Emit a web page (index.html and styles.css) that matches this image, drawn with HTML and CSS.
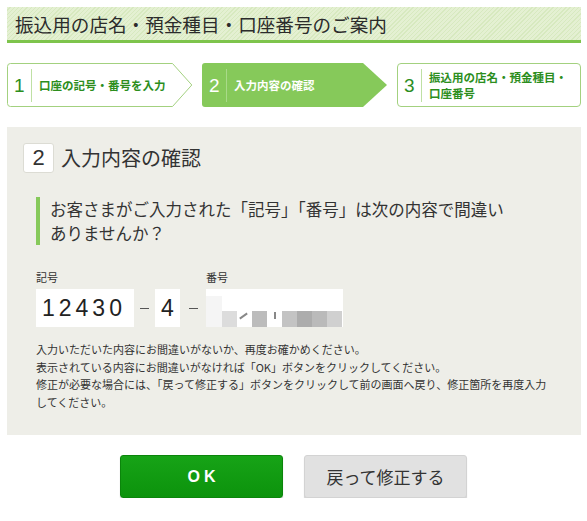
FILE: index.html
```html
<!DOCTYPE html>
<html lang="ja">
<head>
<meta charset="utf-8">
<title>振込用の店名・預金種目・口座番号のご案内</title>
<link rel="stylesheet" href="styles.css">
</head>
<body>
<header class="page-head">
  <h1 class="page-title">振込用の店名・預金種目・口座番号のご案内</h1>
</header>

<ol class="steps">
  <li class="step step-done">
    <svg class="step-bg" width="186" height="44" viewBox="0 0 186 44" aria-hidden="true">
      <path d="M3.5 0.5 H165.5 L184.8 22 L165.5 43.5 H3.5 Q0.5 43.5 0.5 40.5 V3.5 Q0.5 0.5 3.5 0.5 Z" fill="#fff" stroke="#a3d17f" stroke-width="1"/>
    </svg>
    <span class="step-num">1</span>
    <span class="step-div"></span>
    <span class="step-text">口座の記号・番号を入力</span>
  </li>
  <li class="step step-current">
    <svg class="step-bg" width="186" height="44" viewBox="0 0 186 44" aria-hidden="true">
      <path d="M3 0 H161 L185 22 L161 44 H3 Q0 44 0 41 V3 Q0 0 3 0 Z" fill="#86c95a"/>
    </svg>
    <span class="step-num">2</span>
    <span class="step-div"></span>
    <span class="step-text">入力内容の確認</span>
  </li>
  <li class="step step-next">
    <span class="step-num">3</span>
    <span class="step-div"></span>
    <span class="step-text">振込用の店名・預金種目・<br>口座番号</span>
  </li>
</ol>

<section class="panel">
  <h2 class="panel-title"><span class="badge">2</span>入力内容の確認</h2>
  <p class="lead">お客さまがご入力された「記号」「番号」は次の内容で間違いありませんか？</p>

  <div class="fields">
    <span class="label label-kigo">記号</span>
    <span class="label label-bango">番号</span>
    <span class="box box-kigo">12430</span>
    <span class="dash"></span>
    <span class="box box-mid">4</span>
    <span class="dash"></span>
    <span class="box box-bango" aria-label="非表示">
      <span class="px px-light"></span>
      <span class="px" style="background:#dcdcdc"></span>
      <span class="px px-w"><span class="stroke stroke-a"></span></span>
      <span class="px" style="background:#bcbcbc"></span>
      <span class="px px-w"><span class="stroke stroke-b"></span></span>
      <span class="px" style="background:#c3c3c3"></span>
      <span class="px" style="background:#acacac"></span>
      <span class="px" style="background:#bababa"></span>
      <span class="px" style="background:#d0d0d0"></span>
    </span>
  </div>

  <p class="note">入力いただいた内容にお間違いがないか、再度お確かめください。<br>表示されている内容にお間違いがなければ「OK」ボタンをクリックしてください。<br>修正が必要な場合には、「戻って修正する」ボタンをクリックして前の画面へ戻り、修正箇所を再度入力してください。</p>
</section>

<div class="actions">
  <button class="btn btn-ok" type="button">OK</button>
  <button class="btn btn-back" type="button">戻って修正する</button>
</div>
</body>
</html>
```

FILE: styles.css
```css
* { box-sizing: border-box; }

html, body {
  margin: 0;
  padding: 0;
  background: #fff;
}

body {
  width: 587px;
  font-family: "Noto Sans CJK JP", "Liberation Sans", sans-serif;
  color: #333;
}

.page-head {
  margin: 7px 6px 0 7px;
  height: 36px;
  border-bottom: 3px solid #7ec44c;
  background: repeating-linear-gradient(135deg, #e4f0d2 0, #e4f0d2 2px, #d7e9bf 2px, #d7e9bf 3px);
  display: flex;
  align-items: center;
  padding-left: 8px;
}

.page-title {
  margin: 0;
  font-size: 18.6px;
  font-weight: normal;
  color: #2b2b2b;
  line-height: 1;
  padding-top: 1px;
}

/* steps */
.steps {
  list-style: none;
  margin: 20px 6px 0 7px;
  padding: 0;
  display: flex;
  gap: 10px;
  height: 44px;
}

.step {
  position: relative;
  display: flex;
  align-items: center;
  padding-left: 7px;
  height: 44px;
}

.step-done, .step-current {
  width: 185px;
}

.step-next {
  flex: 1;
  border: 1px solid #a3d17f;
  border-radius: 4px;
  padding-left: 6px;
}

.step-bg {
  position: absolute;
  left: 0;
  top: 0;
  z-index: 0;
}

.step-num, .step-div, .step-text {
  position: relative;
  z-index: 1;
}

.step-num {
  font-family: "Liberation Sans", Arial, sans-serif;
  font-size: 19px;
  color: #2c8e1d;
  width: 11px;
  line-height: 1;
}

.step-div {
  width: 1px;
  height: 33px;
  background: #bfe0a4;
  margin: 0 7px 0 6px;
}

.step-text {
  font-size: 11.5px;
  font-weight: bold;
  color: #2c8e1d;
  line-height: 16px;
  white-space: nowrap;
}

.step-current .step-num,
.step-current .step-text {
  color: #fff;
}

.step-current .step-div {
  background: #a9da89;
}

/* panel */
.panel {
  margin: 20px 6px 0 7px;
  background: #eeeee8;
  padding: 16px 20px 24px 16px;
}

.panel-title {
  margin: 0;
  display: flex;
  align-items: center;
  gap: 7px;
  font-size: 20px;
  font-weight: normal;
  color: #333;
  line-height: 30px;
}

.badge {
  width: 31px;
  height: 30px;
  background: #fff;
  border: 1px solid #dcdcd4;
  border-radius: 3px;
  display: flex;
  align-items: center;
  justify-content: center;
  font-family: "Liberation Sans", Arial, sans-serif;
  font-size: 22px;
  color: #333;
}

.lead {
  margin: 24px 0 0 13px;
  border-left: 4px solid #86c95a;
  padding-left: 10px;
  max-width: 480px;
  font-size: 16.5px;
  line-height: 24px;
  color: #333;
}

.fields {
  margin: 24px 0 0 13px;
  display: grid;
  grid-template-columns: 98px 21px 25px 26px 137px;
  grid-template-rows: 16px 38px;
  row-gap: 4px;
}

.label {
  font-size: 11px;
  line-height: 16px;
  color: #333;
}

.label-kigo { grid-column: 1; grid-row: 1; }
.label-bango { grid-column: 5; grid-row: 1; }

.box {
  grid-row: 2;
  background: #fff;
  display: flex;
  align-items: center;
  font-family: "Liberation Sans", Arial, sans-serif;
  font-size: 23px;
  color: #222;
}

.box-kigo {
  grid-column: 1;
  padding-left: 6px;
  letter-spacing: 4px;
}

.box-mid {
  grid-column: 3;
  justify-content: center;
}

.box-bango {
  grid-column: 5;
  align-items: flex-end;
  overflow: hidden;
}

.dash {
  grid-row: 2;
  align-self: center;
  justify-self: center;
  width: 9px;
  height: 1px;
  background: #555;
}

.px {
  width: 15px;
  height: 16px;
  flex: none;
}

.px-light {
  width: 16px;
  height: 31px;
  background: #f5f5f5;
}

.px-w {
  background: #fff;
  position: relative;
}

.stroke {
  position: absolute;
  background: #888;
}

.stroke-a {
  left: 2px;
  top: 4px;
  width: 9px;
  height: 2px;
  transform: rotate(-35deg);
}

.stroke-b {
  left: 7px;
  top: 1px;
  width: 2px;
  height: 7px;
}

.note {
  margin: 14px 0 0 13px;
  max-width: 512px;
  font-size: 11px;
  line-height: 17.5px;
  color: #333;
}

/* buttons */
.actions {
  display: flex;
  justify-content: center;
  gap: 21px;
  margin-top: 20px;
}

.btn {
  width: 163px;
  height: 43px;
  border-radius: 3px;
  font-family: "Noto Sans CJK JP", "Liberation Sans", sans-serif;
  cursor: pointer;
  padding: 0;
}

.btn-ok {
  background: linear-gradient(#17a317, #0c930c);
  border: 1px solid #0b850b;
  box-shadow: 0 1px 1px rgba(0,0,0,0.25);
  color: #fff;
  font-family: "Liberation Sans", Arial, sans-serif;
  font-size: 16px;
  font-weight: bold;
  letter-spacing: 4px;
  padding-left: 4px;
}

.btn-back {
  background: #e1e1e1;
  border: 1px solid #d3d3d3;
  box-shadow: 0 2px 1px rgba(0,0,0,0.18);
  color: #333;
  font-size: 17px;
}
```
